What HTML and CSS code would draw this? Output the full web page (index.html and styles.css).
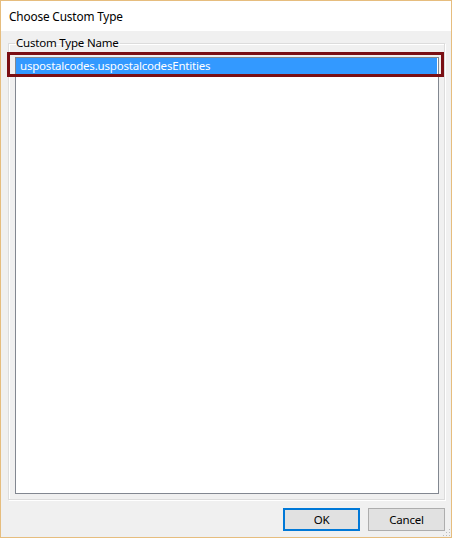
FILE: index.html
```html
<!DOCTYPE html>
<html>
<head>
<meta charset="utf-8">
<title>Choose Custom Type</title>
<link rel="stylesheet" href="styles.css">
</head>
<body>
<div class="window">
  <div class="titlebar">Choose Custom Type</div>
  <div class="client">
    <fieldset class="group">
      <legend class="group-label">Custom Type Name</legend>
      <div class="listbox">
        <div class="item selected">uspostalcodes.uspostalcodesEntities</div>
        <div class="highlight"></div>
      </div>
    </fieldset>
    <div class="buttons">
      <button class="btn default">OK</button>
      <button class="btn">Cancel</button>
    </div>
    <svg class="grip" width="8" height="8" viewBox="0 0 8 8">
      <rect x="6" y="0" width="1" height="1" fill="#bcbcbc"/>
      <rect x="3" y="3" width="1" height="1" fill="#bcbcbc"/>
      <rect x="6" y="3" width="1" height="1" fill="#bcbcbc"/>
      <rect x="0" y="6" width="1" height="1" fill="#bcbcbc"/>
      <rect x="3" y="6" width="1" height="1" fill="#bcbcbc"/>
      <rect x="6" y="6" width="1" height="1" fill="#bcbcbc"/>
    </svg>
  </div>
</div>
</body>
</html>
```
FILE: styles.css
```css
html, body {
  margin: 0;
  padding: 0;
  background: #ffffff;
}

.window {
  position: relative;
  box-sizing: border-box;
  width: 452px;
  height: 538px;
  border: 1px solid #e6bd7e;
  display: flex;
  flex-direction: column;
  font-family: "Segoe UI", "Noto Sans", sans-serif;
  font-size: 11.5px;
  letter-spacing: -0.2px;
  color: #000;
}

.titlebar {
  height: 30px;
  flex: 0 0 30px;
  background: #ffffff;
  padding-left: 8px;
  line-height: 31px;
  font-size: 11.8px;
  letter-spacing: -0.15px;
}

.client {
  position: relative;
  flex: 1;
  background: #f0f0f0;
  padding: 5px 6px 6px 7px;
  display: flex;
  flex-direction: column;
  min-height: 0;
}

.group {
  flex: 1;
  margin: 0;
  padding: 7px 5px 5px 6px;
  border: 1px solid #dcdcdc;
  box-shadow: inset 1px 1px 0 #ffffff, 1px 1px 0 #ffffff;
  min-height: 0;
  display: flex;
  flex-direction: column;
  min-width: 0;
}

.group-label {
  padding: 0 1px;
  margin-left: 0;
  line-height: 14px;
  color: #000;
}

.listbox {
  position: relative;
  flex: 1;
  background: #ffffff;
  border: 1px solid #828790;
}

.item {
  height: 16px;
  line-height: 16px;
  padding-left: 4px;
  margin-right: 1px;
  white-space: nowrap;
}

.item.selected {
  background: #3399ff;
  color: #ffffff;
}

.highlight {
  position: absolute;
  left: -9px;
  top: -6px;
  width: 431px;
  height: 19px;
  border: 3px solid #7a0f14;
}

.buttons {
  flex: 0 0 auto;
  display: flex;
  justify-content: flex-end;
  gap: 8px;
  margin-top: 8px;
}

.btn {
  box-sizing: border-box;
  width: 77px;
  height: 23px;
  margin: 0;
  padding: 0;
  background: #e1e1e1;
  border: 1px solid #adadad;
  font-family: "Segoe UI", "Noto Sans", sans-serif;
  font-size: 11.5px;
  letter-spacing: -0.2px;
  color: #000;
}

.btn.default {
  border: 2px solid #0078d7;
}

.grip {
  position: absolute;
  right: 0;
  bottom: 0;
}
```
